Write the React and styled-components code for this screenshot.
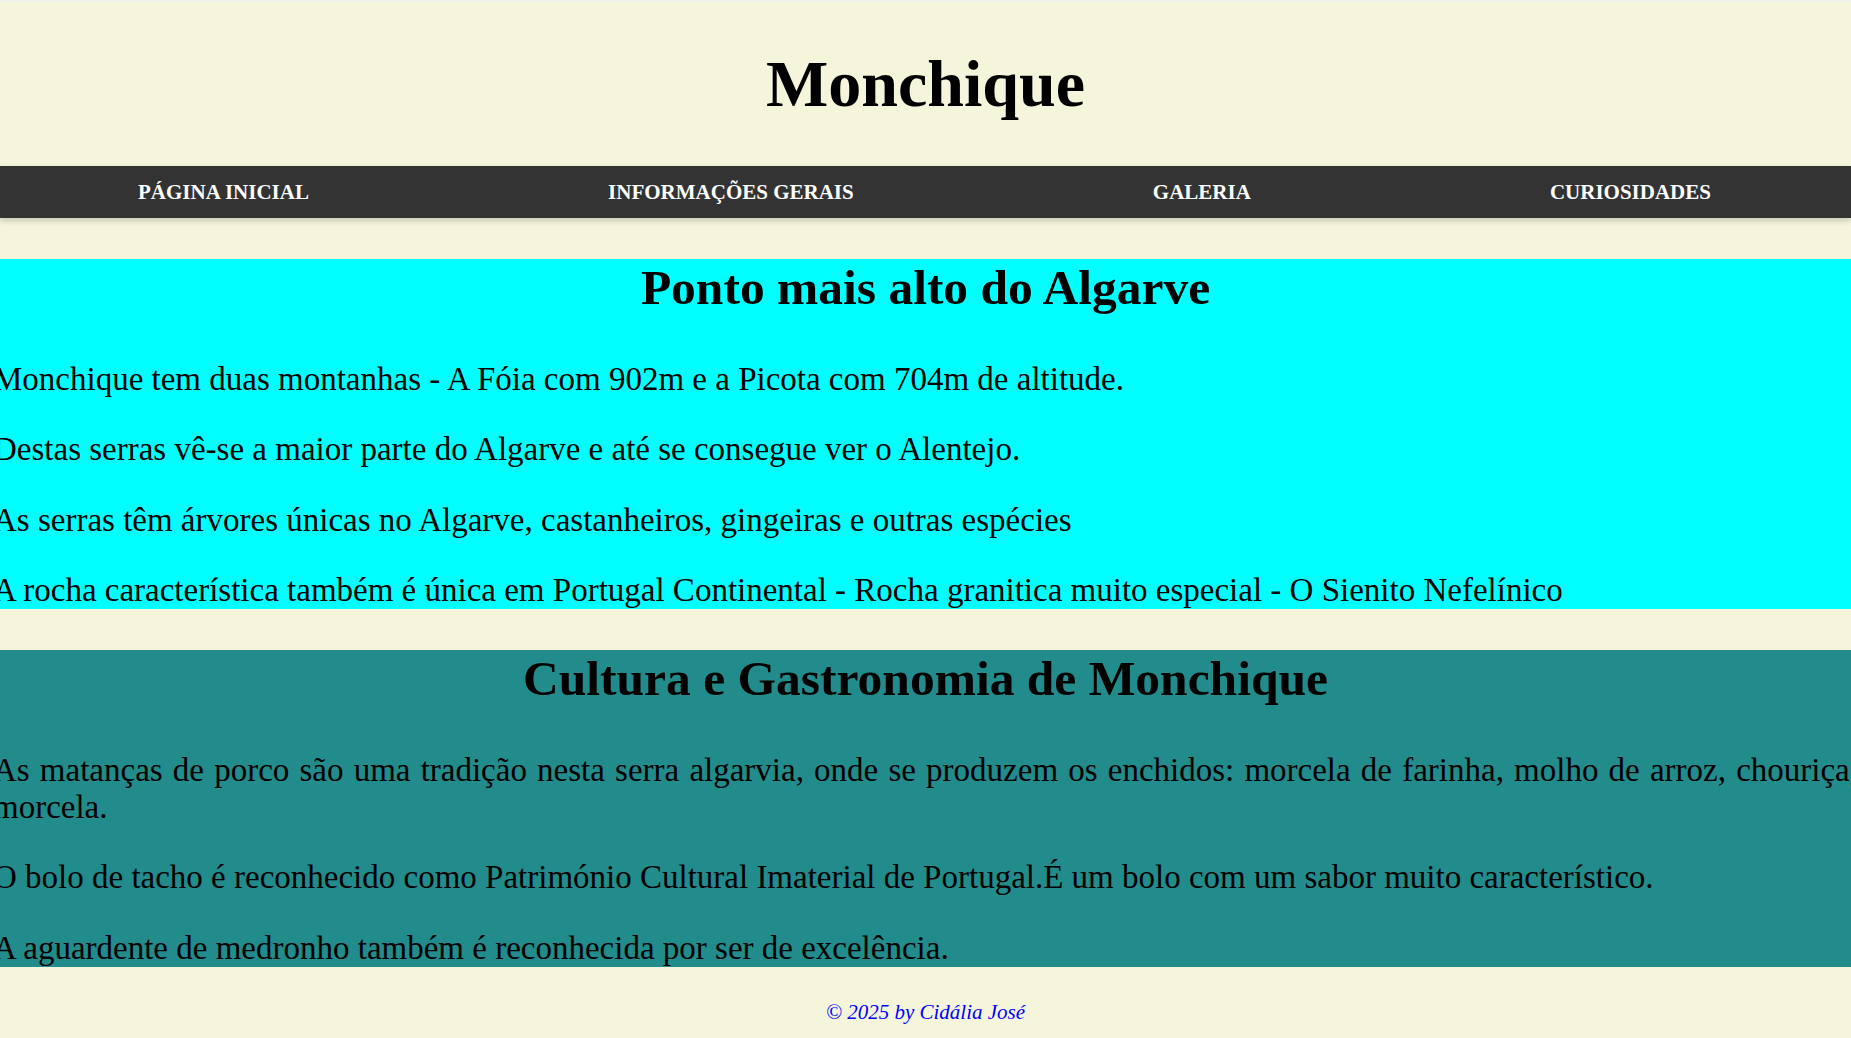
import React from 'react'
import styled, { createGlobalStyle } from 'styled-components'

const GlobalStyle = createGlobalStyle`
html, body {
  margin: 0;
  padding: 0;
  background: #f5f5dc;
  overflow-x: hidden;
}

body {
  font-family: "Liberation Serif", "Times New Roman", serif;
  font-size: 33px;
  color: #000;
}
`

const Header = styled.header`
border-top: 2px solid #efefef;
text-align: center;

h1 {
  font-size: 66px;
  font-weight: 700;
  margin: 44px 0;
  line-height: normal;
}
`

const Nav = styled.nav`
background: #333333;
box-shadow: 0 3px 6px rgba(0, 0, 0, 0.18);

ul {
  list-style: none;
  margin: 0;
  padding: 14px 140px 13px 138px;
  display: flex;
  justify-content: space-between;
  font-size: 21px;
  line-height: normal;
}

a {
  color: #fff;
  font-weight: 700;
  text-decoration: none;
  text-transform: uppercase;
}
`

const Section = styled.section`
background: ${({ tone }) => tone};
margin: 41px 0 33px;

h2 {
  font-size: 49.5px;
  font-weight: 700;
  text-align: center;
  margin: 0 0 44.5px;
  line-height: normal;
}

p {
  margin: 33.5px -7px;
  text-align: ${({ justify }) => (justify ? 'justify' : 'left')};
  line-height: normal;
}

p:last-child {
  margin-bottom: 0;
}
`

const Footer = styled.footer`
text-align: center;
padding: 0 0 24px;

p {
  margin: 0;
  font-size: 21px;
  font-style: italic;
  color: #0000ff;
}
`

const links = ['Página Inicial', 'Informações Gerais', 'Galeria', 'Curiosidades']

const App = () => {
  return (
    <>
      <GlobalStyle />
      <Header>
        <h1>Monchique</h1>
      </Header>

      <Nav>
        <ul>
          {links.map((l) => (
            <li key={l}>
              <a href="#">{l}</a>
            </li>
          ))}
        </ul>
      </Nav>

      <Section tone="#00ffff">
        <h2>Ponto mais alto do Algarve</h2>
        <p>Monchique tem duas montanhas - A Fóia com 902m e a Picota com 704m de altitude.</p>
        <p>Destas serras vê-se a maior parte do Algarve e até se consegue ver o Alentejo.</p>
        <p>As serras têm árvores únicas no Algarve, castanheiros, gingeiras e outras espécies</p>
        <p>A rocha característica também é única em Portugal Continental - Rocha granitica muito especial - O Sienito Nefelínico</p>
      </Section>

      <Section tone="#228b8b" justify>
        <h2>Cultura e Gastronomia de Monchique</h2>
        <p>
          As matanças de porco são uma tradição nesta serra algarvia, onde se produzem os enchidos: morcela de farinha, molho de arroz, chouriça, morcela.
        </p>
        <p>O bolo de tacho é reconhecido como Património Cultural Imaterial de Portugal.É um bolo com um sabor muito característico.</p>
        <p>A aguardente de medronho também é reconhecida por ser de excelência.</p>
      </Section>

      <Footer>
        <p>© 2025 by Cidália José</p>
      </Footer>
    </>
  )
}

export default App
